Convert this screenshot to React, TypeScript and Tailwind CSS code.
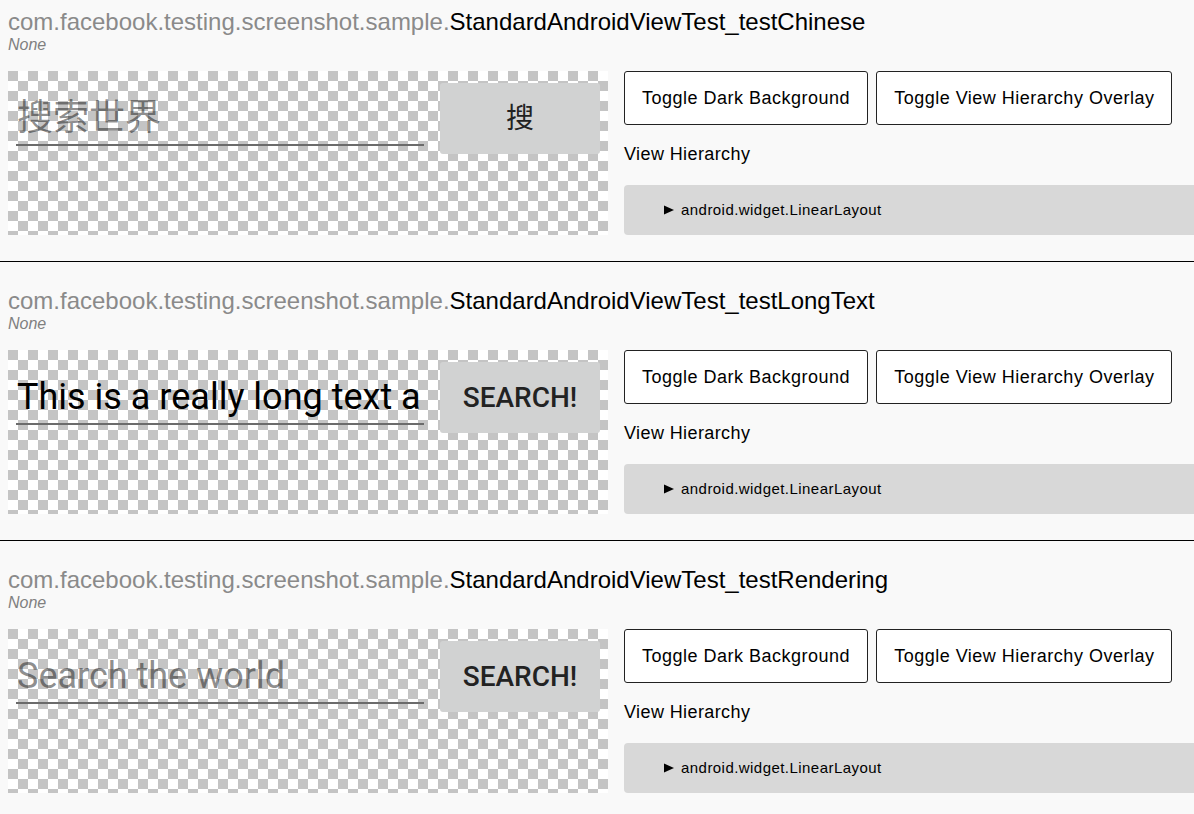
const tests = [
  {
    name: "StandardAndroidViewTest_testChinese",
    text: "搜索世界",
    hint: true,
    button: "搜",
  },
  {
    name: "StandardAndroidViewTest_testLongText",
    text: "This is a really long text a",
    hint: false,
    button: "SEARCH!",
  },
  {
    name: "StandardAndroidViewTest_testRendering",
    text: "Search the world",
    hint: true,
    button: "SEARCH!",
  },
];

function Screenshot({ text, hint, button }: { text: string; hint: boolean; button: string }) {
  const cjk = button === "搜";
  return (
    <div className="w-[600px] h-[164px] shrink-0 bg-[conic-gradient(white_25%,#c4c4c4_0_50%,white_0_75%,#c4c4c4_0)] bg-[length:20px_20px] p-2 flex items-start font-['Roboto','Noto_Sans_CJK_SC',sans-serif]">
      <div className="w-[408px] flex flex-col">
        <div
          className={
            "h-[65px] pl-[1px] pt-[19px] overflow-hidden whitespace-nowrap text-[36px] leading-[40px] " +
            (hint ? "text-black/45" : "text-black")
          }
        >
          {text}
        </div>
        <div className="h-[2px] bg-[#6b6b6b]" />
      </div>
      <button
        className={
          "ml-4 mt-1 w-[160px] h-[71px] rounded-[3px] bg-[#d1d2d2] text-[28px] text-[#222] " +
          (cjk ? "font-normal" : "font-medium")
        }
      >
        {button}
      </button>
    </div>
  );
}

function Section({ name, text, hint, button, first, last }: any) {
  return (
    <section className={(first ? "pt-[8px] " : "pt-[25px] ") + "pb-[26px] " + (last ? "" : "border-b border-black")}>
      <div className="px-2">
        <h2 className="text-[24px] leading-[28px] text-black whitespace-nowrap">
          <span className="text-[#8a8a8a]">com.facebook.testing.screenshot.sample.</span>
          {name}
        </h2>
        <p className="text-[16px] leading-[17px] italic text-[#808080]">None</p>
      </div>
      <div className="mt-[18px] pl-2 flex gap-4">
        <Screenshot text={text} hint={hint} button={button} />
        <div className="flex-1 flex flex-col">
          <div className="flex gap-2">
            <button className="h-[54px] px-[17px] bg-white border border-[#222] rounded-[3px] text-[18px] tracking-[0.5px] text-black">
              Toggle Dark Background
            </button>
            <button className="h-[54px] px-[17px] bg-white border border-[#222] rounded-[3px] text-[18px] tracking-[0.5px] text-black">
              Toggle View Hierarchy Overlay
            </button>
          </div>
          <div className="mt-[19px] text-[18px] leading-[21px] tracking-[0.4px] text-black">View Hierarchy</div>
          <div className="mt-[20px] h-[50px] bg-[#d8d8d8] rounded-l-[4px] flex items-center pl-10 text-[15px] tracking-[0.45px] text-black">
            <svg width="10" height="10" viewBox="0 0 10 10" className="mr-[7px]">
              <path d="M0 0.5 L10 5 L0 9.5 Z" fill="#000" />
            </svg>
            android.widget.LinearLayout
          </div>
        </div>
      </div>
    </section>
  );
}

export default function App() {
  return (
    <div className="min-h-screen w-full bg-[#f9f9f9] font-['Liberation_Sans',Arial,sans-serif] overflow-hidden">
      {tests.map((t, i) => (
        <Section key={t.name} {...t} first={i === 0} last={i === tests.length - 1} />
      ))}
    </div>
  );
}
